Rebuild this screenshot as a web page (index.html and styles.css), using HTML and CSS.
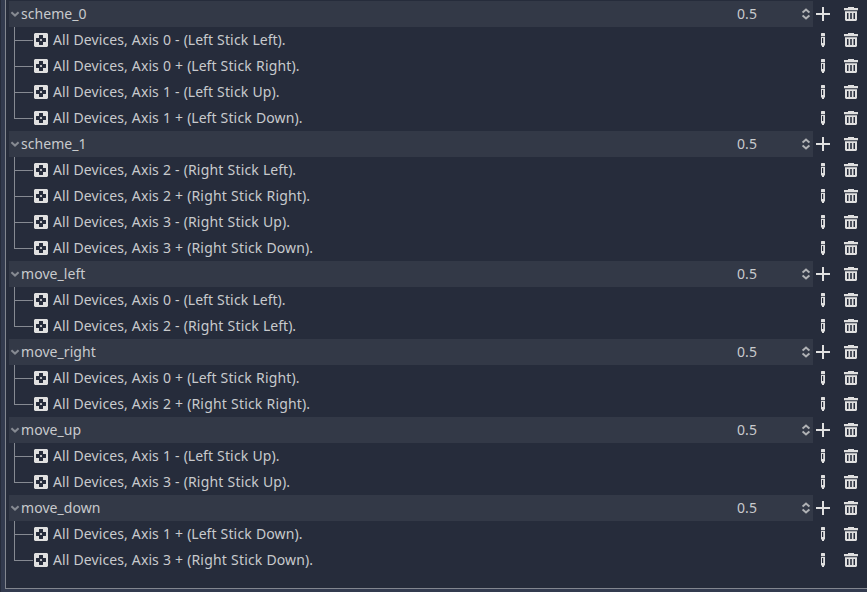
FILE: index.html
```
<!DOCTYPE html>
<html lang="en">
<head>
<meta charset="utf-8">
<title>Input Map</title>
<link rel="stylesheet" href="styles.css">
</head>
<body>
<svg class="defs" aria-hidden="true">
  <symbol id="chevron" viewBox="0 0 10 8"><path d="M1.4 2.3 5 5.6 8.6 2.3" fill="none" stroke="currentColor" stroke-width="2.1"/></symbol>
  <symbol id="pad" viewBox="0 0 14 14"><path fill-rule="evenodd" fill="currentColor" d="M1 0h12l1 1v12l-1 1H1l-1-1V1zM5.3 2 5 2.3V5H2.3L2 5.3v3.4l.3.3H5v2.7l.3.3h3.4l.3-.3V9h2.7l.3-.3V5.3l-.3-.3H9V2.3L8.7 2z"/><circle fill="currentColor" cx="7" cy="7" r="1.1"/></symbol>
  <symbol id="spin" viewBox="0 0 8 12"><path d="M.6 4.6 4 1.5 7.4 4.6M.6 7.4 4 10.5 7.4 7.4" fill="none" stroke="currentColor" stroke-width="2"/></symbol>
  <symbol id="plus" viewBox="0 0 14 14"><path fill="currentColor" d="M6 0h2v6h6v2H8v6H6V8H0V6h6z"/></symbol>
  <symbol id="pencil" viewBox="0 0 4 14"><path fill="currentColor" fill-rule="evenodd" d="M.5 0h3L4 .5V3.2H0V.5zM0 4h4v8l-1 1v1H1v-1l-1-1zM1 5v5h1.2V5z"/></symbol>
  <symbol id="trash" viewBox="0 0 14 14"><path fill="currentColor" fill-rule="evenodd" d="M4 0h6v1h4v2.3H0V1h4zM1 4.3h12V13l-1 1H2l-1-1zM3 6v6h1.5V6zM6.2 6v6h1.6V6zM9.5 6v6H11V6z"/></symbol>
</svg>
<main class="panel">
<section class="action">
  <div class="row head"><div class="title"><svg class="chevron"><use href="#chevron"/></svg><span class="name">scheme_0</span><span class="zone">0.5</span><svg class="spin"><use href="#spin"/></svg></div><svg class="plus"><use href="#plus"/></svg><svg class="trash"><use href="#trash"/></svg></div>
  <div class="row event"><svg class="pad"><use href="#pad"/></svg><span class="label">All Devices, Axis 0 - <i>(Left</i> <b>Stick</b> <i>Left)</i>.</span><svg class="pencil"><use href="#pencil"/></svg><svg class="trash"><use href="#trash"/></svg></div>
  <div class="row event"><svg class="pad"><use href="#pad"/></svg><span class="label">All Devices, Axis 0 + <i>(Left</i> <b>Stick</b> <b>Right</b>).</span><svg class="pencil"><use href="#pencil"/></svg><svg class="trash"><use href="#trash"/></svg></div>
  <div class="row event"><svg class="pad"><use href="#pad"/></svg><span class="label">All Devices, Axis 1 - <i>(Left</i> <b>Stick</b> Up).</span><svg class="pencil"><use href="#pencil"/></svg><svg class="trash"><use href="#trash"/></svg></div>
  <div class="row event"><svg class="pad"><use href="#pad"/></svg><span class="label">All Devices, Axis 1 + <i>(Left</i> <b>Stick</b> Down).</span><svg class="pencil"><use href="#pencil"/></svg><svg class="trash"><use href="#trash"/></svg></div>
</section>
<section class="action">
  <div class="row head"><div class="title"><svg class="chevron"><use href="#chevron"/></svg><span class="name">scheme_1</span><span class="zone">0.5</span><svg class="spin"><use href="#spin"/></svg></div><svg class="plus"><use href="#plus"/></svg><svg class="trash"><use href="#trash"/></svg></div>
  <div class="row event"><svg class="pad"><use href="#pad"/></svg><span class="label">All Devices, Axis 2 - (<b>Right</b> <b>Stick</b> <i>Left)</i>.</span><svg class="pencil"><use href="#pencil"/></svg><svg class="trash"><use href="#trash"/></svg></div>
  <div class="row event"><svg class="pad"><use href="#pad"/></svg><span class="label">All Devices, Axis 2 + (<b>Right</b> <b>Stick</b> <b>Right</b>).</span><svg class="pencil"><use href="#pencil"/></svg><svg class="trash"><use href="#trash"/></svg></div>
  <div class="row event"><svg class="pad"><use href="#pad"/></svg><span class="label">All Devices, Axis 3 - (<b>Right</b> <b>Stick</b> Up).</span><svg class="pencil"><use href="#pencil"/></svg><svg class="trash"><use href="#trash"/></svg></div>
  <div class="row event"><svg class="pad"><use href="#pad"/></svg><span class="label">All Devices, Axis 3 + (<b>Right</b> <b>Stick</b> Down).</span><svg class="pencil"><use href="#pencil"/></svg><svg class="trash"><use href="#trash"/></svg></div>
</section>
<section class="action">
  <div class="row head"><div class="title"><svg class="chevron"><use href="#chevron"/></svg><span class="name">move_left</span><span class="zone">0.5</span><svg class="spin"><use href="#spin"/></svg></div><svg class="plus"><use href="#plus"/></svg><svg class="trash"><use href="#trash"/></svg></div>
  <div class="row event"><svg class="pad"><use href="#pad"/></svg><span class="label">All Devices, Axis 0 - <i>(Left</i> <b>Stick</b> <i>Left)</i>.</span><svg class="pencil"><use href="#pencil"/></svg><svg class="trash"><use href="#trash"/></svg></div>
  <div class="row event"><svg class="pad"><use href="#pad"/></svg><span class="label">All Devices, Axis 2 - (<b>Right</b> <b>Stick</b> <i>Left)</i>.</span><svg class="pencil"><use href="#pencil"/></svg><svg class="trash"><use href="#trash"/></svg></div>
</section>
<section class="action">
  <div class="row head"><div class="title"><svg class="chevron"><use href="#chevron"/></svg><span class="name">move_right</span><span class="zone">0.5</span><svg class="spin"><use href="#spin"/></svg></div><svg class="plus"><use href="#plus"/></svg><svg class="trash"><use href="#trash"/></svg></div>
  <div class="row event"><svg class="pad"><use href="#pad"/></svg><span class="label">All Devices, Axis 0 + <i>(Left</i> <b>Stick</b> <b>Right</b>).</span><svg class="pencil"><use href="#pencil"/></svg><svg class="trash"><use href="#trash"/></svg></div>
  <div class="row event"><svg class="pad"><use href="#pad"/></svg><span class="label">All Devices, Axis 2 + (<b>Right</b> <b>Stick</b> <b>Right</b>).</span><svg class="pencil"><use href="#pencil"/></svg><svg class="trash"><use href="#trash"/></svg></div>
</section>
<section class="action">
  <div class="row head"><div class="title"><svg class="chevron"><use href="#chevron"/></svg><span class="name">move_up</span><span class="zone">0.5</span><svg class="spin"><use href="#spin"/></svg></div><svg class="plus"><use href="#plus"/></svg><svg class="trash"><use href="#trash"/></svg></div>
  <div class="row event"><svg class="pad"><use href="#pad"/></svg><span class="label">All Devices, Axis 1 - <i>(Left</i> <b>Stick</b> Up).</span><svg class="pencil"><use href="#pencil"/></svg><svg class="trash"><use href="#trash"/></svg></div>
  <div class="row event"><svg class="pad"><use href="#pad"/></svg><span class="label">All Devices, Axis 3 - (<b>Right</b> <b>Stick</b> Up).</span><svg class="pencil"><use href="#pencil"/></svg><svg class="trash"><use href="#trash"/></svg></div>
</section>
<section class="action">
  <div class="row head"><div class="title"><svg class="chevron"><use href="#chevron"/></svg><span class="name">move_down</span><span class="zone">0.5</span><svg class="spin"><use href="#spin"/></svg></div><svg class="plus"><use href="#plus"/></svg><svg class="trash"><use href="#trash"/></svg></div>
  <div class="row event"><svg class="pad"><use href="#pad"/></svg><span class="label">All Devices, Axis 1 + <i>(Left</i> <b>Stick</b> Down).</span><svg class="pencil"><use href="#pencil"/></svg><svg class="trash"><use href="#trash"/></svg></div>
  <div class="row event"><svg class="pad"><use href="#pad"/></svg><span class="label">All Devices, Axis 3 + (<b>Right</b> <b>Stick</b> Down).</span><svg class="pencil"><use href="#pencil"/></svg><svg class="trash"><use href="#trash"/></svg></div>
</section>
</main>
</body>
</html>
```
FILE: styles.css
```
* { box-sizing: border-box; }
body {
  margin: 0;
  height: 592px;
  padding: 0 0 3px 4px;
  border-left: 1px solid #262c3b;
  background: #333b4f;
  color: #c8cacd;
  font: 14px/26px "Noto Sans", sans-serif;
  overflow: hidden;
}
.defs { position: absolute; width: 0; height: 0; }
.panel {
  height: 589px;
  padding: 1px 9px 0 3px;
  border-left: 1px solid #82868f;
  border-bottom: 1px solid #82868f;
  background: #262c3b;
}
.row { display: flex; align-items: center; height: 26px; white-space: nowrap; }
.row svg { flex: none; display: block; }
.title {
  display: flex;
  align-items: center;
  width: 804px;
  height: 26px;
  padding-right: 3px;
  background: #333947;
}
.chevron { width: 10px; height: 8px; margin: 0 1px; color: #868a92; }
.name { flex: 1; letter-spacing: 0.06px; }
.zone { width: 65px; letter-spacing: 0.1px; }
.spin { width: 8px; height: 12px; color: #b0b2b5; }
.plus, .trash, .pad { width: 14px; height: 14px; color: #e0e0e0; }
.plus { margin: 0 14px 0 3px; }
.event { padding-left: 5px; }
.event::before {
  content: "";
  width: 1px;
  height: 26px;
  background: #868a92;
}
.event:last-child::before { height: 14px; align-self: flex-start; }
.event::after {
  content: "";
  order: -1;
  width: 19px;
  height: 1px;
  margin: 1px -19px 0 0;
  background: #868a92;
}
.pad { margin: 0 5px 0 19px; }
.label { flex: 1; letter-spacing: 0.09px; word-spacing: 0.3px; }
.label i { font-style: normal; letter-spacing: 0; }
.label b { font-weight: 400; letter-spacing: 0.18px; }
.pencil { width: 4px; height: 14px; margin-right: 19px; color: #e0e0e0; }
```
